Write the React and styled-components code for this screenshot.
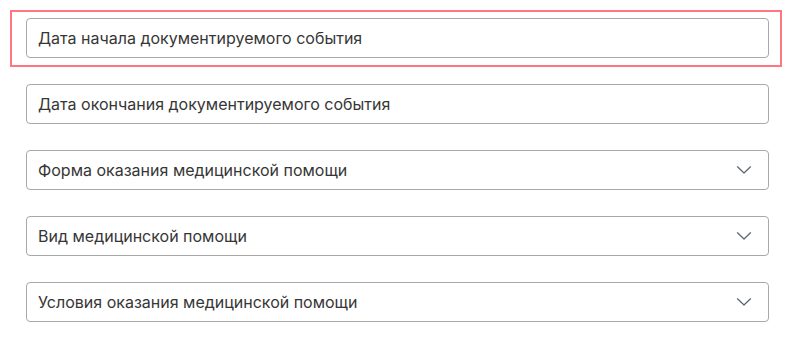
import React from 'react';
import styled, { createGlobalStyle } from 'styled-components';

const GlobalStyle = createGlobalStyle`
  html, body {
    margin: 0;
    padding: 0;
    background: #fff;
  }
  body {
    font-family: Inter, "Noto Sans", sans-serif;
  }
`;

const Form = styled.div`
  display: flex;
  flex-direction: column;
  gap: 26px;
  width: 743px;
  padding: 18px 0 0 26px;
`;

// red focus frame drawn over the first field
const Highlight = styled.div`
  position: relative;
  &::after {
    content: '';
    position: absolute;
    top: -8px;
    left: -16px;
    right: -13px;
    bottom: -9px;
    border: 2px solid #ff7580;
    pointer-events: none;
  }
`;

const Field = styled.div`
  box-sizing: border-box;
  height: 40px;
  display: flex;
  align-items: center;
  justify-content: space-between;
  padding: 0 16px 0 11px;
  border: 1px solid #a8a8a8;
  border-radius: 4px;
  background: #fff;
  font-size: 16px;
  color: #363636;
  cursor: ${p => (p.$select ? 'pointer' : 'text')};
`;

const Label = styled.span`
  white-space: nowrap;
`;

const Chevron = () => (
  <svg width="16" height="10" viewBox="0 0 16 10" fill="none">
    <path d="M1.5 1.8 L8 8 L14.5 1.8" stroke="#5d6670" strokeWidth="1.25" strokeLinecap="round" strokeLinejoin="round" />
  </svg>
);

const fields = [
  { label: 'Дата окончания документируемого события' },
  { label: 'Форма оказания медицинской помощи', select: true },
  { label: 'Вид медицинской помощи', select: true },
  { label: 'Условия оказания медицинской помощи', select: true }
];

export default function App() {
  return (
    <>
      <GlobalStyle />
      <Form>
        <Highlight>
          <Field>
            <Label>Дата начала документируемого события</Label>
          </Field>
        </Highlight>
        {fields.map(f => (
          <Field key={f.label} $select={f.select}>
            <Label>{f.label}</Label>
            {f.select && <Chevron />}
          </Field>
        ))}
      </Form>
    </>
  );
}
